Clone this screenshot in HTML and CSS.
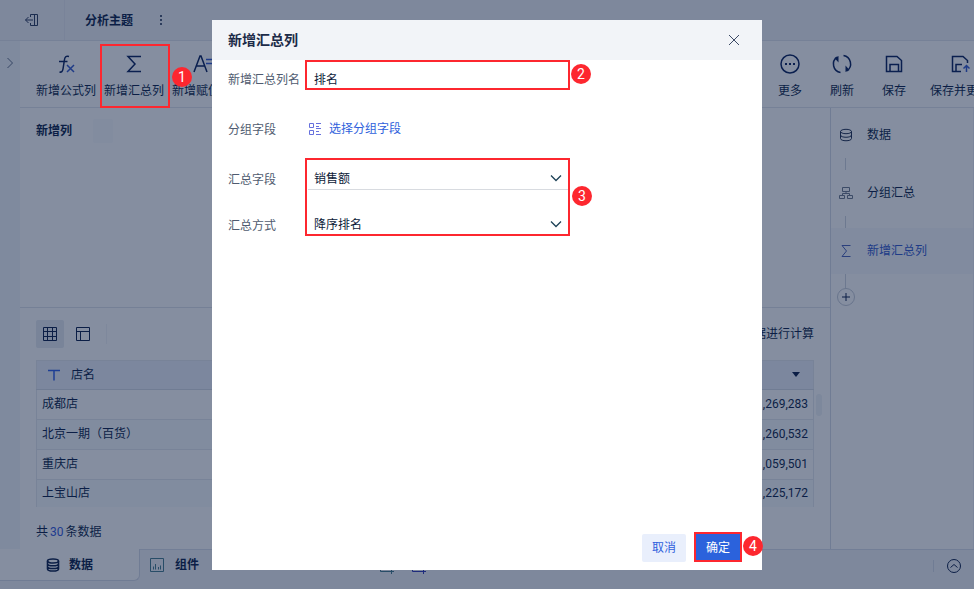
FILE: index.html
```
<!DOCTYPE html>
<html lang="zh-CN">
<head>
    <meta charset="UTF-8">
    <meta name="viewport" content="width=device-width, initial-scale=1.0">
    <title>分析主题</title>
    <link rel="stylesheet" href="styles.css">
</head>
<body>
    <header class="topbar">
        <button class="icon-btn back" aria-label="退出">
            <svg width="14" height="14" viewBox="0 0 14 14"><path d="M5.500 4V1.500H12.500V12.500H5.500V10M9.500 1.500V12.500M0.500 7H8M3.500 4L0.500 7L3.500 10"/></svg>
        </button>
        <h1>分析主题</h1>
        <button class="icon-btn dots-btn" aria-label="更多操作">
            <svg width="4" height="10" viewBox="0 0 4 10" class="solid"><path d="M1 0h2v2H1zM1 4h2v2H1zM1 8h2v2H1z"/></svg>
        </button>
    </header>

    <div class="workspace">
        <aside class="rail">
            <button class="icon-btn" aria-label="展开">
                <svg width="8" height="12" viewBox="0 0 8 12"><path d="M1.500 1L6.500 6L1.500 11"/></svg>
            </button>
        </aside>

        <main class="main">
            <nav class="toolbar">
                <button class="tool">
                    <svg width="24" height="24" viewBox="0 0 24 24"><path d="M15 4.500C12 3.500 10.800 5 10.400 8L9 17C8.600 19.500 7.500 20.500 5.500 20M5 9.500H13.500"/><path class="blue" d="M13 13L20 20M20 13L13 20"/></svg>
                    <span>新增公式列</span>
                </button>
                <button class="tool">
                    <svg width="24" height="24" viewBox="0 0 24 24"><path d="M19 4.500H6L13 12L6 19.500H19"/></svg>
                    <span>新增汇总列</span>
                </button>
                <button class="tool">
                    <svg width="24" height="24" viewBox="0 0 24 24"><path d="M4 20L10 4H11L17 20M6 14H15"/><path class="blue" d="M16 7.500H23M16 11.500H23"/></svg>
                    <span>新增赋值列</span>
                </button>
                <div class="tool-group">
                    <button class="tool">
                        <svg width="24" height="24" viewBox="0 0 24 24"><circle cx="12" cy="12" r="9"/><path class="dots" d="M7 11h2v2H7zM11 11h2v2h-2zM15 11h2v2h-2z"/></svg>
                        <span>更多</span>
                    </button>
                    <button class="tool">
                        <svg width="24" height="24" viewBox="0 0 24 24"><path d="M10.500 20.500A8.500 8.500 0 0 1 7 5.200M13.500 3.500A8.500 8.500 0 0 1 17 18.800"/><path class="dots" d="M8.500 4V10.500L4.500 6zM15.500 20V13.500L19.500 18z"/></svg>
                        <span>刷新</span>
                    </button>
                    <button class="tool">
                        <svg width="24" height="24" viewBox="0 0 24 24"><path d="M4.500 4.500H15L19.500 8.500V19.500H4.500ZM8 19.500V12.500H16.500V19.500"/></svg>
                        <span>保存</span>
                    </button>
                    <button class="tool">
                        <svg width="24" height="24" viewBox="0 0 24 24"><path d="M13 19.500H4.500V4.500H15L19.500 8.500V11M8 19.500V12.500H14"/><path class="blue" d="M18.500 20V13.500M15.500 16.500L18.500 13.500L21.500 16.500"/></svg>
                        <span>保存并更新</span>
                    </button>
                </div>
            </nav>

            <div class="content">
                <div class="left">
                    <section class="editor">
                        <h2>新增列</h2>
                        <span class="chip"></span>
                    </section>

                    <section class="preview">
                        <div class="preview-tools">
                            <button class="view-btn active" aria-label="明细表">
                                <svg width="16" height="16" viewBox="0 0 16 16"><path d="M1.500 1.500H14.500V14.500H1.500ZM1.500 5.500H14.500M1.500 10.500H14.500M5.500 1.500V14.500M10.500 1.500V14.500"/></svg>
                            </button>
                            <button class="view-btn" aria-label="交叉表">
                                <svg width="16" height="16" viewBox="0 0 16 16"><path d="M1.500 1.500H14.500V14.500H1.500ZM1.500 5.500H14.500M5.500 5.500V14.500"/></svg>
                            </button>
                            <span class="divider"></span>
                            <span class="note">对全部数据进行计算</span>
                        </div>
                        <div class="table-wrap">
                            <table>
                                <thead>
                                    <tr>
                                        <th><span class="th-name"><svg class="field-type" width="14" height="12" viewBox="0 0 14 12"><path d="M1 1.500H13M7 1.500V11.500"/></svg>店名</span></th>
                                        <th class="num"><svg class="solid" width="8" height="6" viewBox="0 0 8 6"><path d="M0 0H8L4 5z"/></svg></th>
                                    </tr>
                                </thead>
                                <tbody>
                                    <tr><td>成都店</td><td class="num">1,269,283</td></tr>
                                    <tr><td>北京一期（百货）</td><td class="num">1,260,532</td></tr>
                                    <tr><td>重庆店</td><td class="num">1,059,501</td></tr>
                                    <tr><td>上宝山店</td><td class="num">1,225,172</td></tr>
                                </tbody>
                            </table>
                            <span class="scroll-thumb"></span>
                        </div>
                        <p class="total">共<b>30</b>条数据</p>
                    </section>
                </div>

                <aside class="steps">
                    <a href="#data" class="step">
                        <svg width="14" height="14" viewBox="0 0 14 14"><ellipse cx="7" cy="3.500" rx="5.500" ry="2.200"/><path d="M1.500 3.500V10.500C1.500 13.500 12.500 13.500 12.500 10.500V3.500M1.500 7C1.500 10 12.500 10 12.500 7"/></svg>
                        数据
                    </a>
                    <span class="line"></span>
                    <a href="#group" class="step muted">
                        <svg width="14" height="14" viewBox="0 0 14 14"><path d="M3.500 1.500H10.500V5.500H3.500ZM0.500 9.500H5.500V12.500H0.500ZM8.500 9.500H13.500V12.500H8.500ZM3.500 9.500V7.500H10.500V9.500M7 5.500V7.500"/></svg>
                        分组汇总
                    </a>
                    <span class="line"></span>
                    <a href="#summary" class="step active">
                        <svg width="14" height="14" viewBox="0 0 14 14"><path d="M11.500 1.500H3L7.500 7L3 12.500H11.500"/></svg>
                        新增汇总列
                    </a>
                    <span class="line last"></span>
                    <button class="add-step" aria-label="添加步骤">
                        <svg width="8" height="8" viewBox="0 0 8 8"><path d="M4 0V8M0 4H8"/></svg>
                    </button>
                </aside>
            </div>
        </main>
    </div>

    <footer class="tabs">
        <a href="#tab-data" class="tab active">
            <svg width="14" height="14" viewBox="0 0 14 14" class="thick"><ellipse cx="7" cy="3" rx="5.500" ry="2"/><path d="M1.500 3V11C1.500 13.700 12.500 13.700 12.500 11V3M1.500 5.700C1.500 8.400 12.500 8.400 12.500 5.700M1.500 8.500C1.500 11.200 12.500 11.200 12.500 8.500"/></svg>
            数据
        </a>
        <a href="#tab-chart" class="tab">
            <svg width="14" height="14" viewBox="0 0 14 14" class="teal"><path d="M0.500 0.500H13.500V13.500H0.500ZM3.500 8.500V11.500M5.500 6V11.500M8.500 9V11.500M10.500 7.500V11.500"/></svg>
            组件
        </a>
        <div class="tab-actions">
            <button class="icon-btn teal" aria-label="添加组件">
                <svg width="16" height="16" viewBox="0 0 16 16"><path d="M1.500 1.500H12.500V7M1.500 1.500V13.500H15M12.500 10V16"/></svg>
            </button>
            <button class="icon-btn indigo" aria-label="添加仪表板">
                <svg width="16" height="16" viewBox="0 0 16 16"><path d="M1.500 1.500H12.500V7M1.500 1.500V13.500H15M12.500 10V16"/></svg>
            </button>
        </div>
        <span class="divider"></span>
        <button class="icon-btn" aria-label="收起">
            <svg width="16" height="16" viewBox="0 0 16 16"><circle cx="8" cy="8" r="6.500"/><path d="M4.500 9.500L8 6.500L11.500 9.500"/></svg>
        </button>
    </footer>

    <div class="overlay">
        <form class="dialog" role="dialog" aria-labelledby="dialog-title">
            <div class="dialog-header">
                <h2 id="dialog-title">新增汇总列</h2>
                <button type="button" class="icon-btn" aria-label="关闭">
                    <svg width="12" height="12" viewBox="0 0 12 12"><path d="M1 1L11 11M11 1L1 11"/></svg>
                </button>
            </div>
            <div class="dialog-body">
                <div class="row">
                    <label for="col-name">新增汇总列名</label>
                    <input type="text" id="col-name" value="排名">
                </div>
                <div class="row">
                    <span class="label">分组字段</span>
                    <button type="button" class="pick">
                        <svg width="14" height="14" viewBox="0 0 14 14"><path d="M1.500 1.500H5.500V5.500H1.500ZM1.500 8.500H5.500V12.500H1.500ZM8 1.500H13M8 4.500H11M8 6.500H13M8 9.500H11M8 12.500H13"/></svg>
                        选择分组字段
                    </button>
                </div>
                <div class="row">
                    <label for="col-field">汇总字段</label>
                    <div class="select">
                        <select id="col-field"><option>销售额</option></select>
                        <svg width="12" height="8" viewBox="0 0 12 8"><path d="M1 1.500L6 6.500L11 1.500"/></svg>
                    </div>
                </div>
                <div class="row">
                    <label for="col-method">汇总方式</label>
                    <div class="select">
                        <select id="col-method"><option>降序排名</option></select>
                        <svg width="12" height="8" viewBox="0 0 12 8"><path d="M1 1.500L6 6.500L11 1.500"/></svg>
                    </div>
                </div>
            </div>
            <div class="dialog-footer">
                <button type="button" class="btn">取消</button>
                <button type="submit" class="btn primary">确定</button>
            </div>

            <span class="mark mark-name"><i>2</i></span>
            <span class="mark mark-fields"><i>3</i></span>
            <span class="mark mark-ok"><i>4</i></span>
        </form>
    </div>
    <span class="mark mark-tool"><i>1</i></span>
</body>
</html>
```
FILE: styles.css
```
* {
    margin: 0;
    padding: 0;
    box-sizing: border-box;
}

body {
    font-family: Roboto, "Noto Sans CJK SC", sans-serif;
    font-size: 12px;
    line-height: 18px;
    color: #0b1f4a;
    background-color: #f0f2f7;
    min-height: 100vh;
    display: flex;
    flex-direction: column;
    position: relative;
    overflow: hidden;
}

button, input, select {
    font: inherit;
    color: inherit;
    background: none;
    border: none;
}

button {
    cursor: pointer;
}

a {
    color: inherit;
    text-decoration: none;
}

svg {
    display: block;
    flex-shrink: 0;
    fill: none;
    stroke: currentColor;
}

svg.solid, .dots {
    fill: currentColor;
    stroke: none;
}

.blue {
    stroke: #3358cc;
}

.icon-btn {
    display: flex;
    align-items: center;
    justify-content: center;
}

.divider {
    width: 1px;
    background-color: #dfe3ec;
}

/* top bar */
.topbar {
    height: 41px;
    border-bottom: 1px solid #e0e4ec;
    display: flex;
    align-items: center;
}

.topbar .back {
    width: 65px;
    height: 40px;
    border-right: 1px solid #e6e9f0;
    color: #2d3d5e;
}

.topbar h1 {
    font-size: 12px;
    line-height: 18px;
    padding-top: 2px;
    margin: 0 26px 0 20px;
}

.dots-btn {
    color: #4d5b77;
}

.workspace {
    flex: 1;
    display: flex;
}

.rail {
    width: 20px;
    padding-top: 16px;
    background-color: #f3f7fb;
    color: #5d6b85;
}

.rail .icon-btn {
    width: 20px;
}

.main {
    flex: 1;
    min-width: 0;
    background-color: #fff;
    display: flex;
    flex-direction: column;
}

.toolbar {
    height: 67px;
    padding: 11px 0 0 16px;
    border-bottom: 1px solid #e0e4ec;
    display: flex;
    gap: 8px;
    overflow: hidden;
}

.tool {
    display: flex;
    flex-direction: column;
    align-items: center;
    gap: 6px;
    white-space: nowrap;
    height: 48px;
}

.tool svg {
    color: #08205c;
    stroke-width: 1.5;
}

.tool-group {
    display: flex;
    gap: 8px;
    margin-left: auto;
    margin-right: -22px;
}

.tool-group .tool {
    min-width: 44px;
    padding: 0 6px;
}

.content {
    flex: 1;
    display: flex;
}

.left {
    flex: 1;
    min-width: 0;
    display: flex;
    flex-direction: column;
}

.editor {
    flex: 1;
    padding: 11px 16px;
    border-bottom: 1px solid #dfe3ea;
    display: flex;
    gap: 21px;
}

.editor h2 {
    font-size: 12px;
    line-height: 24px;
}

.chip {
    width: 20px;
    height: 24px;
    border-radius: 2px;
    background-color: #f8fafd;
}

/* table preview */
.preview {
    padding: 12px 16px 8px;
}

.preview-tools {
    display: flex;
    align-items: center;
    gap: 5px;
    margin-bottom: 12px;
}

.view-btn {
    width: 28px;
    height: 28px;
    border-radius: 2px;
    display: flex;
    align-items: center;
    justify-content: center;
}

.view-btn.active {
    background-color: #e6eaf1;
}

.preview-tools .divider {
    height: 20px;
    margin-left: 4px;
    background-color: #f0f2f6;
}

.note {
    margin-left: auto;
}

.table-wrap {
    position: relative;
}

table {
    width: 100%;
    border-collapse: collapse;
    border: 1px solid #e4e8ef;
    border-bottom: none;
}

th, td {
    height: 30px;
    padding: 0 5px;
    text-align: left;
    font-weight: normal;
    border-bottom: 1px solid #e4e8ef;
}

th {
    height: 29px;
    background-color: #edf1fa;
    border-bottom-color: #d5dae5;
}

tbody tr:nth-child(even) {
    background-color: #f7fafd;
}

tbody tr:last-child td {
    border-bottom: none;
    height: 28px;
}

.num {
    text-align: right;
}

th.num {
    padding-right: 13px;
}

th.num svg {
    margin-left: auto;
}

.th-name {
    display: flex;
    align-items: center;
    gap: 10px;
    padding-left: 5px;
}

.field-type {
    color: #2f5fe8;
    stroke-width: 1.5;
}

.scroll-thumb {
    position: absolute;
    top: 34px;
    right: -8px;
    width: 6px;
    height: 22px;
    border-radius: 3px;
    background-color: #eef2f6;
}

.total {
    margin-top: 16px;
}

.total b {
    font-weight: normal;
    color: #3358dd;
    margin: 0 2px;
}

/* step list */
.steps {
    width: 144px;
    padding-top: 4px;
    border-left: 1px solid #d5dae6;
    border-right: 1px solid #eceff4;
}

.step {
    height: 46px;
    padding-left: 8px;
    display: flex;
    align-items: center;
    gap: 14px;
}

.step svg {
    color: #1f2f50;
}

.step.muted svg {
    color: #6d788c;
}

.step.active {
    background-color: #f6f9fd;
    color: #3358cc;
}

.step.active svg {
    color: #4a62b8;
}

.line {
    display: block;
    width: 1px;
    height: 12px;
    margin-left: 14px;
    background-color: #cfd4de;
}

.line.last {
    height: 14px;
}

.add-step {
    width: 18px;
    height: 18px;
    margin-left: 6px;
    border: 1px solid #c4cad6;
    border-radius: 50%;
    display: flex;
    align-items: center;
    justify-content: center;
}

/* bottom tabs */
.tabs {
    height: 40px;
    padding-right: 12px;
    display: flex;
    align-items: center;
    border-top: 1px solid #d9deea;
}

.tab {
    height: 32px;
    padding-left: 10px;
    font-weight: bold;
    display: flex;
    align-items: center;
    align-self: flex-start;
    gap: 11px;
    margin-top: -1px;
}

.tab.active {
    width: 140px;
    padding-left: 46px;
    gap: 9px;
    background-color: #fff;
    border-right: 1px solid #d5dae6;
    border-bottom: 1px solid #d5dae6;
    border-bottom-right-radius: 6px;
}

.tab-actions {
    display: flex;
    gap: 16px;
    margin: 0 0 8px 180px;
}

.thick {
    stroke-width: 1.6;
}

.teal {
    color: #437a8c;
}

.indigo {
    color: #3038b8;
}

.tabs .divider {
    height: 12px;
    margin: 0 12px 8px auto;
    background-color: #d5dae6;
}

.tabs .icon-btn {
    margin-bottom: 8px;
}

.tab-actions .icon-btn {
    margin-bottom: 0;
}

/* dialog */
.overlay {
    position: absolute;
    inset: 0;
    padding: 20px 0;
    background-color: rgba(12, 30, 66, 0.5);
    display: flex;
    justify-content: center;
    align-items: flex-start;
}

.dialog {
    position: relative;
    width: 550px;
    min-height: 550px;
    background-color: #fff;
    display: flex;
    flex-direction: column;
}

.dialog-header {
    height: 40px;
    padding: 0 22px 0 16px;
    background-color: #f2f4f8;
    display: flex;
    align-items: center;
    justify-content: space-between;
}

.dialog-header h2 {
    font-size: 14px;
    color: #1c2b48;
}

.dialog-header .icon-btn {
    color: #3c4a66;
}

.dialog-body {
    flex: 1;
    padding: 6px 16px;
}

.row {
    display: grid;
    grid-template-columns: 80px 260px;
    align-items: center;
    height: 24px;
    margin-bottom: 26px;
}

.row:nth-child(3) {
    margin-bottom: 22px;
}

.row label, .label {
    padding-top: 3px;
    color: #4f5b70;
}

.row input, .select select {
    width: 100%;
    height: 24px;
    padding: 0 6px;
    color: #0b1a38;
}

.select {
    display: grid;
    align-items: center;
    border-bottom: 1px solid #d8dbe0;
}

.select select, .select svg {
    grid-area: 1 / 1;
}

.select select {
    height: 23px;
    padding-top: 2px;
    appearance: none;
}

.select svg {
    justify-self: end;
    margin-right: 6px;
    color: #1d4257;
    stroke-width: 1.3;
    pointer-events: none;
}

.pick {
    display: flex;
    align-items: center;
    gap: 7px;
    padding-top: 2px;
    color: #2f5fdc;
}

.pick svg {
    color: #6670dd;
}

.dialog-footer {
    padding: 8px 20px;
    display: flex;
    justify-content: flex-end;
    gap: 8px;
}

.btn {
    height: 28px;
    padding: 0 10px;
    border-radius: 2px;
    background-color: #e9effc;
    color: #2f5fdc;
}

.btn.primary {
    padding: 0 12px;
    background-color: #2b62dc;
    color: #fff;
}

/* numbered callouts */
.mark {
    position: absolute;
    border: 2px solid #fd272f;
    pointer-events: none;
}

.mark i {
    position: absolute;
    left: 100%;
    width: 20px;
    height: 20px;
    border-radius: 50%;
    background-color: #fd272f;
    color: #fff;
    font-size: 14px;
    font-style: normal;
    line-height: 20px;
    text-align: center;
}

.mark-tool {
    left: 100px;
    top: 44px;
    width: 70px;
    height: 64px;
}

.mark-tool i {
    top: 21px;
    margin-left: 4px;
}

.mark-name {
    left: 93px;
    top: 40px;
    width: 265px;
    height: 30px;
}

.mark-name i {
    top: 2px;
    margin-left: 3px;
}

.mark-fields {
    left: 93px;
    top: 138px;
    width: 265px;
    height: 78px;
}

.mark-fields i {
    top: 26px;
    margin-left: 4px;
}

.mark-ok {
    right: 20px;
    bottom: 8px;
    width: 48px;
    height: 30px;
}

.mark-ok i {
    top: 2px;
    margin-left: 3px;
}
```
